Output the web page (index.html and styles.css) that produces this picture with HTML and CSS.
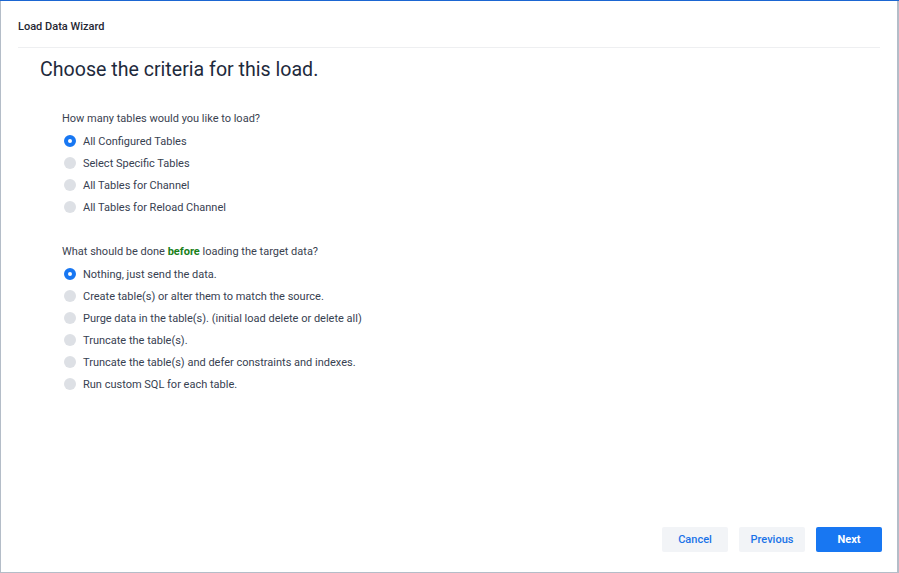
FILE: index.html
```html
<!DOCTYPE html>
<html>
<head>
<meta charset="utf-8">
<link rel="stylesheet" href="styles.css">
</head>
<body>
<div class="topline"></div>
<div class="dialog">
  <div class="header">Load Data Wizard</div>
  <div class="content">
    <h1 class="title">Choose the criteria for this load.</h1>
    <div class="group">
      <div class="question">How many tables would you like to load?</div>
      <label class="option"><span class="radio checked"></span>All Configured Tables</label>
      <label class="option"><span class="radio"></span>Select Specific Tables</label>
      <label class="option"><span class="radio"></span>All Tables for Channel</label>
      <label class="option"><span class="radio"></span>All Tables for Reload Channel</label>
    </div>
    <div class="group">
      <div class="question">What should be done <b class="green">before</b> loading the target data?</div>
      <label class="option"><span class="radio checked"></span>Nothing, just send the data.</label>
      <label class="option"><span class="radio"></span>Create table(s) or alter them to match the source.</label>
      <label class="option"><span class="radio"></span>Purge data in the table(s). (initial load delete or delete all)</label>
      <label class="option"><span class="radio"></span>Truncate the table(s).</label>
      <label class="option"><span class="radio"></span>Truncate the table(s) and defer constraints and indexes.</label>
      <label class="option"><span class="radio"></span>Run custom SQL for each table.</label>
    </div>
  </div>
  <div class="footer">
    <button class="btn">Cancel</button>
    <button class="btn">Previous</button>
    <button class="btn primary">Next</button>
  </div>
</div>
</body>
</html>
```
FILE: styles.css
```css
html, body {
  margin: 0;
  padding: 0;
  width: 899px;
  height: 573px;
  overflow: hidden;
}
body {
  background: #b4bdc8;
  font-family: Roboto, "Liberation Sans", sans-serif;
  position: relative;
}
.topline {
  height: 1px;
  background: #1b66d2;
}
.dialog {
  margin-left: 1px;
  width: 896px;
  height: 571px;
  background: #fff;
  display: flex;
  flex-direction: column;
  box-sizing: border-box;
}
.header {
  margin: 0 17px 0 17px;
  padding: 19px 0 0 0;
  height: 27px;
  border-bottom: 1px solid #eeeff1;
  font-size: 11px;
  font-weight: 500;
  color: #1f2733;
  box-sizing: content-box;
  line-height: 14px;
}
.content {
  flex: 1;
  padding-left: 39px;
}
.title {
  margin: 10px 0 0 0;
  font-size: 19.6px;
  font-weight: 400;
  color: #1e2a3c;
  line-height: 24px;
}
.group {
  padding-left: 22px;
  margin-top: 30px;
}
.group + .group {
  margin-top: 27px;
}
.question {
  font-size: 11px;
  color: #3a4250;
  line-height: 14px;
  margin-bottom: 4px;
}
.green {
  color: #198019;
  font-weight: 700;
}
.option {
  display: flex;
  align-items: center;
  height: 22px;
  font-size: 11px;
  color: #374151;
}
.radio {
  width: 12px;
  height: 12px;
  border-radius: 50%;
  background: #dde0e5;
  margin: 0 7px 0 2px;
  box-sizing: border-box;
  flex: none;
}
.radio.checked {
  background: #fff;
  border: 4px solid #1877f2;
}
.footer {
  display: flex;
  justify-content: flex-end;
  gap: 11px;
  padding: 0 15px 20px 0;
}
.btn {
  width: 66px;
  height: 25px;
  border: none;
  border-radius: 2px;
  background: #f2f4f7;
  color: #1a73e8;
  font-family: Roboto, "Liberation Sans", sans-serif;
  font-size: 11px;
  font-weight: 500;
  padding: 0;
}
.btn.primary {
  background: #1877f2;
  color: #fff;
  font-weight: 700;
}
```
